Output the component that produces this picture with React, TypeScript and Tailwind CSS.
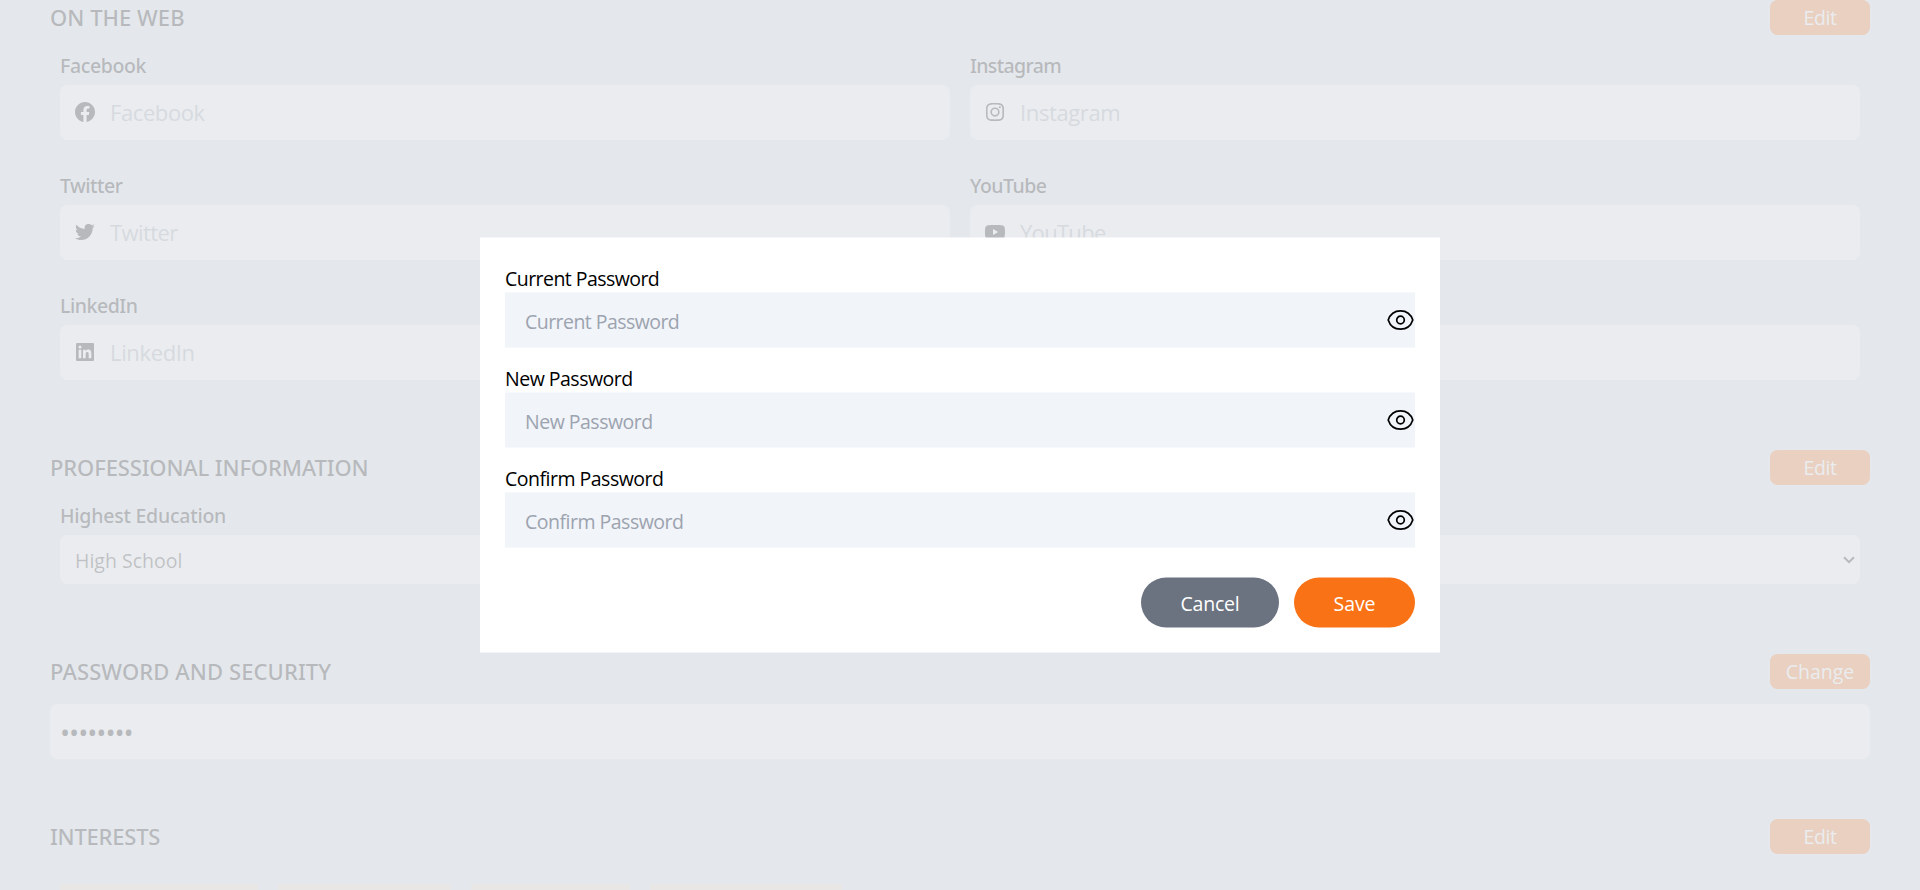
import type { ReactNode } from "react";
import type { IconType } from "react-icons";
import {
  BiLogoFacebookCircle,
  BiLogoInstagram,
  BiLogoLinkedinSquare,
  BiLogoTwitter,
  BiLogoYoutube,
} from "react-icons/bi";

interface SocialFieldProps {
  name: string;
  icon?: IconType;
  labelClass?: string;
  placeholderClass?: string;
}

function FieldLabel({ children, className }: { children: ReactNode; className: string }) {
  return (
    <div
      className={`mb-[5px] h-[30px] pt-px font-['Noto_Sans',sans-serif] text-[19.5px] leading-[30px] font-medium ${className}`}
    >
      {children}
    </div>
  );
}

function SocialField({ name, icon: Icon, labelClass = "", placeholderClass = "" }: SocialFieldProps) {
  return (
    <div className="flex flex-col">
      <FieldLabel className={labelClass}>{name}</FieldLabel>
      <div className="flex h-[55px] items-center rounded-[7.5px] bg-white pl-[13px]">
        {Icon && <Icon className="mb-px size-6 shrink-0" />}
        {Icon && (
          <span className={`mb-[2px] ml-[13px] text-[22px] leading-[30px] text-[#9ca3af] ${placeholderClass}`}>
            {name}
          </span>
        )}
      </div>
    </div>
  );
}

interface SectionHeaderProps {
  title: string;
  titleClass: string;
  action: string;
  actionClass: string;
}

function SectionHeader({ title, titleClass, action, actionClass }: SectionHeaderProps) {
  return (
    <div className="flex h-[35px] items-center justify-between">
      <h2 className={`font-['Noto_Sans',sans-serif] text-[22px] leading-[35px] font-medium ${titleClass}`}>{title}</h2>
      <button
        className={`h-[35px] w-[100px] rounded-[7.5px] bg-[#f97316] text-[19.5px] leading-[35px] text-white ${actionClass}`}
      >
        {action}
      </button>
    </div>
  );
}

function EyeIcon() {
  return (
    <svg
      className="mr-px"
      width="27"
      height="21"
      viewBox="0 0 27 21"
      fill="none"
      stroke="#000"
      strokeWidth="1.7"
      strokeLinejoin="round"
    >
      <path d="M1.2 10.5C3.1 4.8 7.8 1.3 13.5 1.3S23.9 4.8 25.8 10.5C23.9 16.2 19.2 19.7 13.5 19.7S3.1 16.2 1.2 10.5Z" />
      <circle cx="13.5" cy="10.5" r="3.8" />
    </svg>
  );
}

function PasswordField({ label, textClass }: { label: string; textClass: string }) {
  return (
    <div className="flex flex-col">
      <div className={`h-[30px] pt-px text-[19.5px] leading-[30px] text-black ${textClass}`}>{label}</div>
      <div className="flex h-[55px] items-center justify-between bg-[#f1f4f9] pl-5">
        <span className={`pt-[3px] text-[19.5px] leading-[30px] text-[#9ca3af] ${textClass}`}>{label}</span>
        <EyeIcon />
      </div>
    </div>
  );
}

function Chip({ className }: { className: string }) {
  return <div className={`h-10 rounded-t-[3px] bg-[#f5e7cc] ${className}`} />;
}

function Section({ className, children }: { className: string; children: ReactNode }) {
  return <section className={`flex flex-col ${className}`}>{children}</section>;
}

export default function App() {
  return (
    <div className="relative h-[890px] w-full overflow-hidden bg-[#e2e8f0] font-['Open_Sans','Noto_Sans',sans-serif] text-black">
      <main className="flex flex-col px-[50px]">
        <Section className="h-[450px]">
          <SectionHeader title="ON THE WEB" titleClass="tracking-[0.04px]" action="Edit" actionClass="tracking-[-0.4px]" />
          <div className="mt-[15px] grid grid-cols-2 gap-x-5 gap-y-[30px] px-2.5">
            <SocialField name="Facebook" icon={BiLogoFacebookCircle} labelClass="tracking-[-0.38px]" placeholderClass="tracking-[-0.4px]" />
            <SocialField name="Instagram" icon={BiLogoInstagram} labelClass="tracking-[-0.63px]" placeholderClass="tracking-[-0.38px]" />
            <SocialField name="Twitter" icon={BiLogoTwitter} labelClass="tracking-[-0.5px]" placeholderClass="tracking-[-0.6px]" />
            <SocialField name="YouTube" icon={BiLogoYoutube} labelClass="tracking-[-0.5px]" placeholderClass="tracking-[-0.7px]" />
            <SocialField name="LinkedIn" icon={BiLogoLinkedinSquare} labelClass="tracking-[-0.47px]" placeholderClass="tracking-[-0.35px]" />
            <SocialField name="" />
          </div>
        </Section>

        <Section className="h-[204px]">
          <SectionHeader title="PROFESSIONAL INFORMATION" titleClass="tracking-[-0.14px]" action="Edit" actionClass="tracking-[-0.4px]" />
          <div className="mt-[15px] flex flex-col px-2.5">
            <FieldLabel className="tracking-[-0.24px]">Highest Education</FieldLabel>
            <div className="flex h-[49px] items-center justify-between rounded-[7.5px] bg-white pr-[5px] pl-[15px]">
              <span className="pt-[2px] text-[19.5px] leading-[30px] tracking-[0.02px] text-black/85">High School</span>
              <svg width="12" height="8" viewBox="0 0 12 8" fill="none" stroke="currentColor" strokeWidth="2">
                <path d="M1 1.2 6 6.2 11 1.2" />
              </svg>
            </div>
          </div>
        </Section>

        <Section className="h-[165px]">
          <SectionHeader title="PASSWORD AND SECURITY" titleClass="tracking-[0.1px]" action="Change" actionClass="tracking-[0.02px]" />
          <div className="mt-[15px] flex h-[55px] items-center rounded-[7.5px] bg-white pl-[10px]">
            <span className="pt-[3px] text-[27px] leading-[30px] tracking-[-1.07px]">••••••••</span>
          </div>
        </Section>

        <Section className="h-[71px]">
          <SectionHeader title="INTERESTS" titleClass="tracking-[-0.22px]" action="Edit" actionClass="tracking-[-0.4px]" />
          <div className="mt-[30px] flex gap-5 px-2.5">
            <Chip className="w-[198px]" />
            <Chip className="w-[173px]" />
            <Chip className="w-[159px]" />
            <Chip className="w-[192px]" />
          </div>
        </Section>
      </main>

      <div className="absolute inset-0 flex items-center justify-center bg-[#e5e7eb]/80">
        <div className="mb-px flex w-[960px] translate-y-[0.5px] flex-col bg-white p-[25px]">
          <div className="flex flex-col gap-[15px]">
            <PasswordField label="Current Password" textClass="tracking-[-0.55px]" />
            <PasswordField label="New Password" textClass="tracking-[-0.5px]" />
            <PasswordField label="Confirm Password" textClass="tracking-[-0.5px]" />
          </div>
          <div className="mt-[30px] flex justify-end gap-[15px]">
            <button className="h-[50px] w-[138px] rounded-full bg-[#6b7280] pt-[2px] text-[19.5px] tracking-[-0.21px] text-white">
              Cancel
            </button>
            <button className="h-[50px] w-[121px] rounded-full bg-[#f97316] pt-[2px] text-[19.5px] tracking-[-0.09px] text-white">
              Save
            </button>
          </div>
        </div>
      </div>
    </div>
  );
}
